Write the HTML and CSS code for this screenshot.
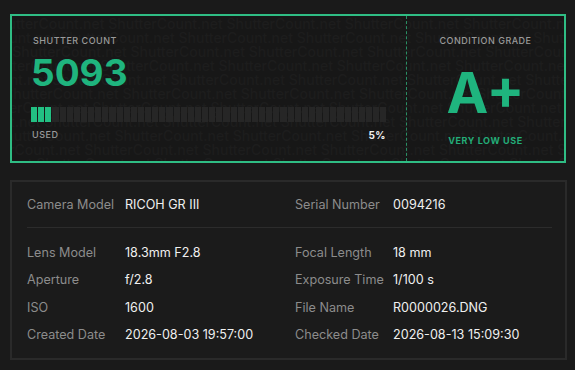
FILE: index.html
```html
<!DOCTYPE html>
<html lang="en">

<head>
    <meta charset="UTF-8">
    <meta name="viewport" content="width=device-width, initial-scale=1.0">
    <title>Shutter Count</title>
    <link rel="stylesheet" href="styles.css">
</head>

<body>
    <div class="result-card">
        <!-- watermark layer -->
        <div class="watermark" aria-hidden="true" id="watermark"></div>

        <div class="count-side">
            <div class="label">Shutter Count</div>
            <div class="count">5093</div>
            <div class="bar" id="bar"></div>
            <div class="bar-foot">
                <span class="label">Used</span>
                <span class="percent">5%</span>
            </div>
        </div>

        <div class="grade-side">
            <div class="label">Condition Grade</div>
            <div class="grade">A+</div>
            <div class="grade-text">Very Low Use</div>
        </div>
    </div>

    <div class="info-card">
        <div class="info-grid">
            <div class="row"><span class="key">Camera Model</span><span class="val">RICOH GR III</span></div>
            <div class="row"><span class="key">Serial Number</span><span class="val">0094216</span></div>
        </div>
        <div class="divider"></div>
        <div class="info-grid">
            <div class="row"><span class="key">Lens Model</span><span class="val">18.3mm F2.8</span></div>
            <div class="row"><span class="key">Focal Length</span><span class="val">18 mm</span></div>
            <div class="row"><span class="key">Aperture</span><span class="val">f/2.8</span></div>
            <div class="row"><span class="key">Exposure Time</span><span class="val">1/100 s</span></div>
            <div class="row"><span class="key">ISO</span><span class="val">1600</span></div>
            <div class="row"><span class="key">File Name</span><span class="val">R0000026.DNG</span></div>
            <div class="row"><span class="key">Created Date</span><span class="val">2026-08-03 19:57:00</span></div>
            <div class="row"><span class="key">Checked Date</span><span class="val">2026-08-13 15:09:30</span></div>
        </div>
    </div>

    <script>
        // segment bar: 50 pieces, 5% used
        const bar = document.getElementById('bar');
        const used = 3;
        for (let i = 0; i < 50; i++) {
            const seg = document.createElement('div');
            seg.className = i < used ? 'seg on' : 'seg';
            bar.appendChild(seg);
        }

        // watermark rows
        const wm = document.getElementById('watermark');
        const offsets = [-22, -70, -118, -30, -78, -126, -38, -86, -134, -46, -94];
        offsets.forEach(off => {
            const line = document.createElement('div');
            line.className = 'wm-line';
            line.style.marginLeft = off + 'px';
            line.textContent = 'ShutterCount.net '.repeat(6);
            wm.appendChild(line);
        });
    </script>
</body>

</html>
```

FILE: styles.css
```css
body {
    margin: 0;
    padding: 14px 8px 10px 10px;
    background-color: #1a1a1a;
    font-family: Inter, "Noto Sans", sans-serif;
    color: #e6e6e6;
}

.result-card {
    position: relative;
    display: flex;
    width: 552px;
    height: 145px;
    border: 2px solid #2fbd84;
    background-color: #171717;
    overflow: hidden;
}

.watermark {
    position: absolute;
    top: 1px;
    left: 0;
    right: 0;
    bottom: 0;
    overflow: hidden;
    z-index: 0;
}

.wm-line {
    font-size: 14px;
    font-weight: 500;
    line-height: 14px;
    white-space: nowrap;
    color: #1d1d1d;
}

.count-side {
    position: relative;
    z-index: 1;
    width: 355px;
    padding: 19px 20px 0 19px;
    border-right: 1px dashed #2a8f64;
}

.grade-side {
    position: relative;
    z-index: 1;
    flex: 1;
    display: flex;
    flex-direction: column;
    align-items: center;
    padding-top: 19px;
}

.label {
    font-size: 9px;
    line-height: 12px;
    font-weight: 500;
    letter-spacing: 0.5px;
    text-transform: uppercase;
    color: #9a9a9a;
}

.count-side > .label {
    padding-left: 2px;
}

.count {
    margin-top: 8px;
    font-size: 37px;
    line-height: 36px;
    font-weight: 700;
    color: #1fb47e;
}

.bar {
    display: flex;
    gap: 1px;
    height: 15px;
    margin-top: 16px;
}

.seg {
    flex: 1;
    background-color: #262626;
}

.seg.on {
    background-color: #22c083;
}

.bar-foot {
    display: flex;
    justify-content: space-between;
    margin-top: 7px;
    padding-left: 1px;
}

.percent {
    font-size: 10px;
    line-height: 12px;
    font-weight: 700;
    letter-spacing: 0.5px;
    color: #f2f2f2;
}

.grade {
    margin-top: 18px;
    font-size: 56px;
    line-height: 56px;
    font-weight: 700;
    color: #1fb47e;
}

.grade-text {
    margin-top: 14px;
    font-size: 9px;
    line-height: 12px;
    font-weight: 700;
    letter-spacing: 0.6px;
    text-transform: uppercase;
    color: #23ad78;
}

.info-card {
    margin-top: 17px;
    width: 525px;
    padding: 9px 13px 9.5px 15px;
    border: 2px solid #2a2a2a;
    background-color: #1b1b1b;
}

.info-grid {
    display: grid;
    grid-template-columns: 268px 1fr;
}

.row {
    display: flex;
    height: 27.5px;
    align-items: center;
    font-size: 12.6px;
}

.key {
    width: 98px;
    color: #8c8c8c;
}

.val {
    color: #f0f0f0;
}

.divider {
    height: 1px;
    margin: 8px 0 11px;
    background-color: #2c2c2c;
}
```
